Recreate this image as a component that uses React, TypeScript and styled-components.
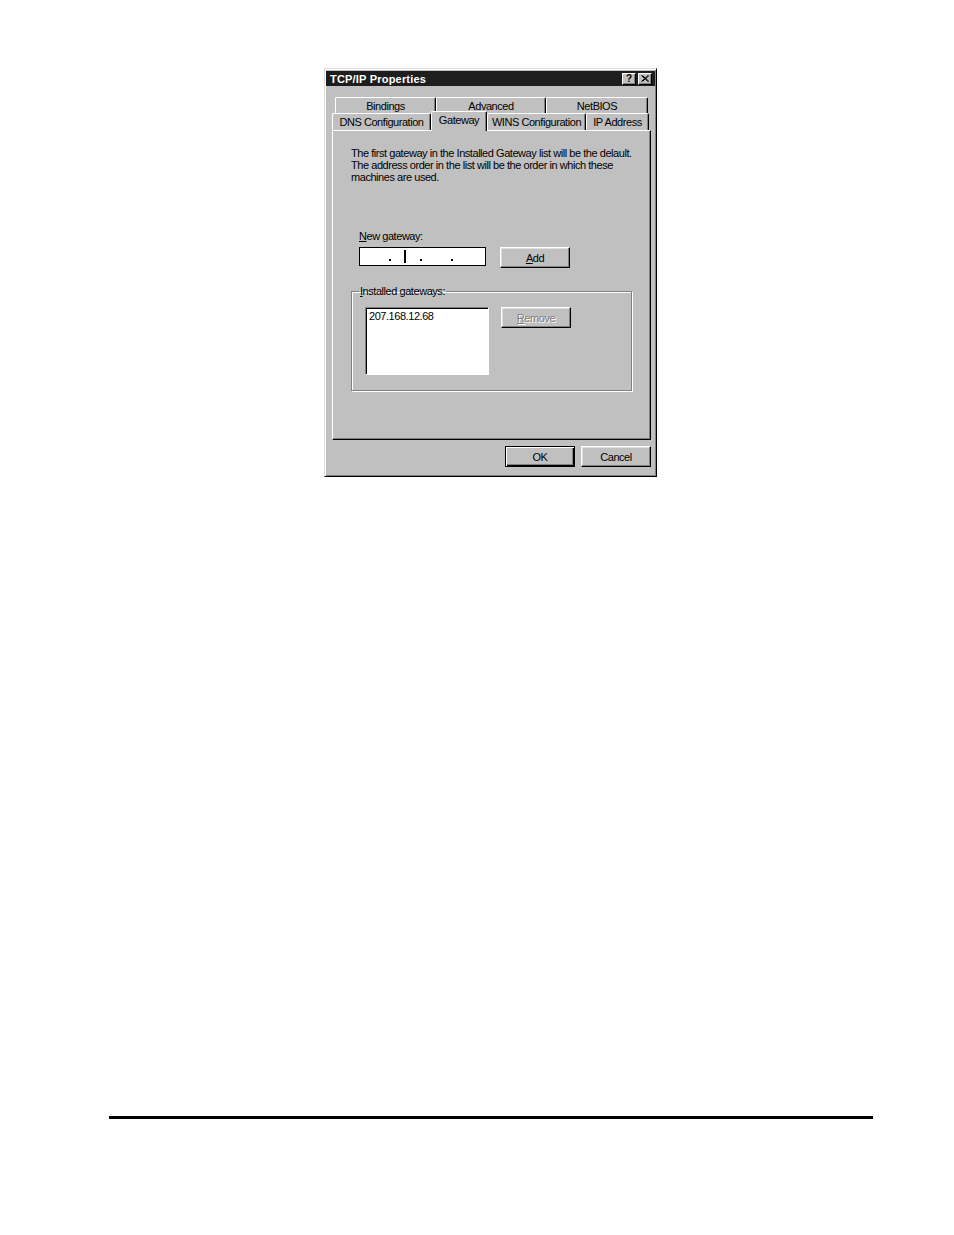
import React from 'react'
import styled, { createGlobalStyle, css } from 'styled-components'

const GlobalStyle = createGlobalStyle`
  html, body {
    margin: 0;
    padding: 0;
    background: #fff;
  }
  body {
    font-family: "Liberation Sans", Arial, sans-serif;
  }
`

// MS Sans Serif look-alike: Arial metrics, squeezed a little
const uiText = css`
  font-family: "Liberation Sans", Arial, sans-serif;
  font-size: 11px;
  letter-spacing: -0.45px;
  color: #000;
  white-space: nowrap;
`

export const Page = styled.div`
  width: 954px;
  min-height: 1235px;
  padding-top: 68px;
  box-sizing: border-box;
`

export const Window = styled.div`
  margin-left: 324px;
  width: 333px;
  box-sizing: border-box;
  background: #c0c0c0;
  border: 1px solid;
  border-color: #dfdfdf #000 #000 #dfdfdf;
  padding: 1px;
  box-shadow: inset 1px 1px #fff, inset -1px -1px #808080;
`

export const TitleBar = styled.div`
  display: flex;
  align-items: center;
  justify-content: space-between;
  height: 15px;
  margin-top: 1px;
  padding: 0 3px 0 4px;
  background: #1e1e1e;
`

export const Title = styled.span`
  color: #fff;
  font: bold 11px "Liberation Sans", Arial, sans-serif;
  letter-spacing: 0.2px;
`

export const TitleButtons = styled.div`
  display: flex;
  gap: 2px;
`

export const TitleButton = styled.div`
  width: 14px;
  height: 12px;
  box-sizing: border-box;
  background: #c0c0c0;
  border: 1px solid;
  border-color: #fff #000 #000 #fff;
  box-shadow: inset -1px -1px #808080;
  display: flex;
  align-items: center;
  justify-content: center;
  font: bold 10px "Liberation Sans", Arial, sans-serif;
  color: #000;
  line-height: 1;
`

export const Body = styled.div`
  padding: 11px 4px 8px 6px;
`

export const TabRow = styled.div<{ $offset?: number; $h: number }>`
  display: flex;
  align-items: flex-end;
  height: ${p => p.$h}px;
  margin-left: ${p => p.$offset ?? 0}px;
`

export const Tab = styled.div<{ $w: number; $active?: boolean }>`
  ${uiText};
  width: ${p => p.$w}px;
  height: 17px;
  box-sizing: border-box;
  border-top: 1px solid #fff;
  border-left: 1px solid #fff;
  border-right: 1px solid #000;
  border-radius: 2px 2px 0 0;
  box-shadow: inset -1px 0 #808080;
  background: #c0c0c0;
  display: flex;
  align-items: center;
  justify-content: center;
  ${p =>
    p.$active &&
    css`
      position: relative;
      z-index: 1;
      height: 20px;
      margin-bottom: -1px;
      align-items: flex-start;
      padding-top: 2px;
    `}
`

export const Panel = styled.div`
  width: 319px;
  height: 310px;
  box-sizing: border-box;
  border: 1px solid;
  border-color: #fff #000 #000 #fff;
  box-shadow: inset -1px -1px #808080;
  padding: 16px 18px 0 18px;
`

export const Description = styled.p`
  ${uiText};
  margin: 0;
  line-height: 12px;
`

export const GatewaySection = styled.div`
  margin-top: 47px;
  padding-left: 8px;
`

export const FieldLabel = styled.div`
  ${uiText};
  line-height: 12px;
`

export const Key = styled.span`
  text-decoration: underline;
`

export const FieldRow = styled.div`
  display: flex;
  align-items: flex-start;
  gap: 14px;
  margin-top: 5px;
`

export const IpBox = styled.div`
  display: flex;
  width: 127px;
  height: 19px;
  box-sizing: border-box;
  border: 1px solid #000;
  background: #fff;
`

export const IpSegment = styled.div`
  width: 28px;
  display: flex;
  align-items: center;
  justify-content: center;
`

export const IpDot = styled.div`
  width: 3px;
  display: flex;
  align-items: flex-end;
  justify-content: center;
  padding-bottom: 4px;
  box-sizing: border-box;
  &::after {
    content: '';
    width: 2px;
    height: 2px;
    background: #000;
  }
`

export const Caret = styled.span`
  width: 2px;
  height: 13px;
  background: #000;
`

export const Button = styled.button<{ $default?: boolean; $w?: number }>`
  ${uiText};
  width: ${p => p.$w ?? 70}px;
  height: 21px;
  box-sizing: border-box;
  margin: 0;
  padding: 0;
  background: #c0c0c0;
  border: 1px solid;
  border-color: #fff #000 #000 #fff;
  box-shadow: inset -1px -1px #808080, inset 1px 1px #dfdfdf;
  cursor: default;
  ${p =>
    p.$default &&
    css`
      border-color: #000;
      box-shadow: inset 1px 1px #fff, inset -1px -1px #000, inset -2px -2px #808080;
    `}
  &:disabled {
    color: #808080;
    text-shadow: 1px 1px #fff;
  }
`

export const GroupBox = styled.fieldset`
  margin: 17px 0 0 0;
  padding: 0 0 15px 13px;
  width: 281px;
  box-sizing: border-box;
  border: 1px solid #808080;
  box-shadow: inset 1px 1px #fff, 1px 1px #fff;
  min-inline-size: 0;
`

export const Legend = styled.legend`
  ${uiText};
  margin-left: -6px;
  padding: 0 1px;
  line-height: 12px;
`

export const GroupRow = styled.div`
  display: flex;
  align-items: flex-start;
  gap: 12px;
  margin-top: 10px;
`

export const ListBox = styled.div`
  ${uiText};
  width: 124px;
  height: 68px;
  box-sizing: border-box;
  background: #fff;
  border: 1px solid;
  border-color: #808080 #fff #fff #808080;
  box-shadow: inset 1px 1px #000;
  padding: 2px 3px;
  line-height: 12px;
`

export const Footer = styled.div`
  display: flex;
  justify-content: flex-end;
  gap: 6px;
  margin-top: 6px;
`

export const Rule = styled.div`
  margin: 639px 0 0 109px;
  width: 764px;
  height: 3px;
  background: #000;
`

const CloseGlyph: React.FC = () => (
  <svg width="8" height="7" viewBox="0 0 8 7">
    <path d="M0.5 0.5 L7 6.5 M1.5 0.5 L8 6.5 M7 0.5 L0.5 6.5 M8 0.5 L1.5 6.5" stroke="#000" strokeWidth="1" />
  </svg>
)

const App: React.FC = () => {
  return (
    <Page>
      <GlobalStyle />
      <Window>
        <TitleBar>
          <Title>TCP/IP Properties</Title>
          <TitleButtons>
            <TitleButton>?</TitleButton>
            <TitleButton>
              <CloseGlyph />
            </TitleButton>
          </TitleButtons>
        </TitleBar>
        <Body>
          <TabRow $offset={3} $h={17}>
            <Tab $w={101}>Bindings</Tab>
            <Tab $w={110}>Advanced</Tab>
            <Tab $w={102}>NetBIOS</Tab>
          </TabRow>
          <TabRow $h={16}>
            <Tab $w={99}>DNS Configuration</Tab>
            <Tab $w={56} $active>Gateway</Tab>
            <Tab $w={99}>WINS Configuration</Tab>
            <Tab $w={63}>IP Address</Tab>
          </TabRow>
          <Panel>
            <Description>
              The first gateway in the Installed Gateway list will be the delault.
              <br />
              The address order in the list will be the order in which these
              <br />
              machines are used.
            </Description>
            <GatewaySection>
              <FieldLabel>
                <Key>N</Key>ew gateway:
              </FieldLabel>
              <FieldRow>
                <IpBox>
                  <IpSegment />
                  <IpDot />
                  <IpSegment>
                    <Caret />
                  </IpSegment>
                  <IpDot />
                  <IpSegment />
                  <IpDot />
                  <IpSegment />
                </IpBox>
                <Button>
                  <Key>A</Key>dd
                </Button>
              </FieldRow>
            </GatewaySection>
            <GroupBox>
              <Legend>
                <Key>I</Key>nstalled gateways:
              </Legend>
              <GroupRow>
                <ListBox>207.168.12.68</ListBox>
                <Button disabled>
                  <Key>R</Key>emove
                </Button>
              </GroupRow>
            </GroupBox>
          </Panel>
          <Footer>
            <Button $default>OK</Button>
            <Button>Cancel</Button>
          </Footer>
        </Body>
      </Window>
      <Rule />
    </Page>
  )
}

export default App
